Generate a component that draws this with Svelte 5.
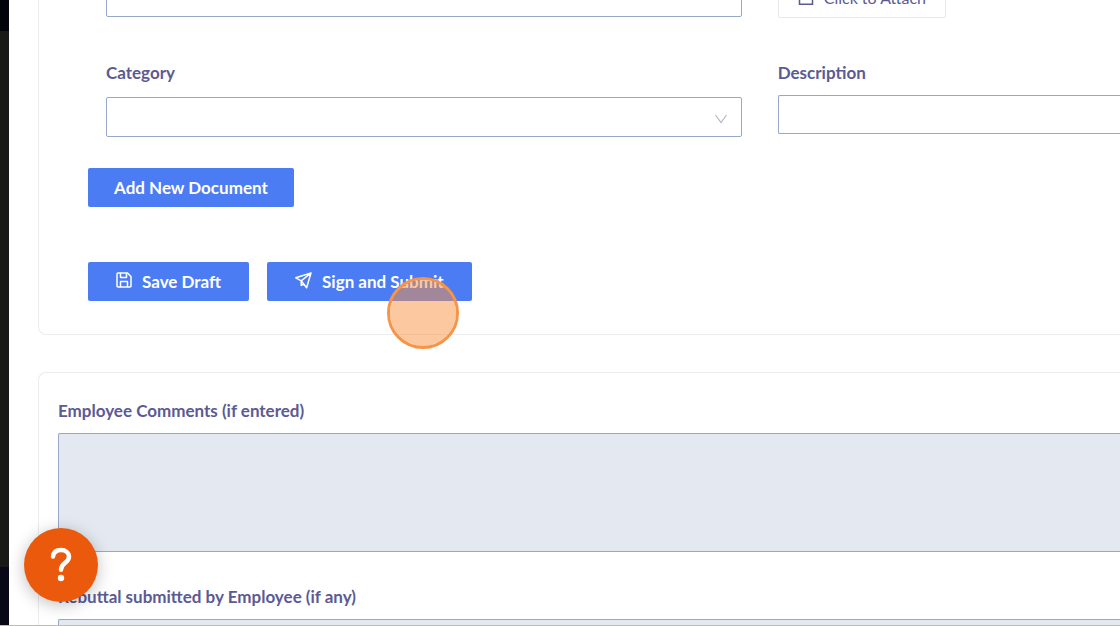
<script>
  let documentName = $state('');
  let category = $state('');
  let description = $state('');
</script>

<div class="shell">
  <aside class="rail">
    <div class="rail-top"></div>
    <div class="rail-middle"></div>
    <div class="rail-bottom"></div>
  </aside>

  <main class="content">
    <section class="card documents">
      <div class="fields">
        <div class="field">
          <input type="text" aria-label="Document name" bind:value={documentName} />
        </div>
        <div class="field">
          <button class="attach" type="button">
            <svg width="16" height="16" viewBox="0 0 16 16" fill="none" stroke="currentColor" stroke-width="1.5" aria-hidden="true">
              <path d="M1.500 9v5.300h13V9M8 8V1M5 4l3-3 3 3" />
            </svg>
            Click to Attach
          </button>
        </div>
        <div class="field">
          <label for="category">Category</label>
          <div class="select">
            <select id="category" bind:value={category}>
              <option value=""></option>
            </select>
            <svg class="chevron" width="12" height="10" viewBox="0 0 12 10" fill="none" stroke="currentColor" stroke-width="1.200" aria-hidden="true">
              <path d="M.5 1 6 8.500 11.500 1" />
            </svg>
          </div>
        </div>
        <div class="field">
          <label class="tight" for="description">Description</label>
          <input id="description" type="text" bind:value={description} />
        </div>
      </div>

      <button class="primary add" type="button">Add New Document</button>

      <div class="actions">
        <button class="primary" type="button">
          <svg width="16" height="16" viewBox="0 0 16 16" fill="none" stroke="currentColor" stroke-width="1.500" stroke-linejoin="round" aria-hidden="true">
            <path d="M2 1h9.500L15 4.500V14a1 1 0 0 1-1 1H2a1 1 0 0 1-1-1V2a1 1 0 0 1 1-1Z" />
            <path d="M4.500 1v4.500h6V1M4.500 15V9.500h7V15" />
          </svg>
          Save Draft
        </button>
        <button class="primary submit" type="button">
          <svg width="17" height="17" viewBox="0 0 17 17" fill="none" stroke="currentColor" stroke-width="1.500" stroke-linejoin="round" aria-hidden="true">
            <path d="M16 1 .8 5.800 6.200 8.800 11.600 15.800 16 1ZM6.200 8.800 16 1M6.200 8.800v4.600l2.500-1.400" />
          </svg>
          Sign and Submit
          <span class="pointer"></span>
        </button>
      </div>
    </section>

    <section class="card comments">
      <label for="comments">Employee Comments (if entered)</label>
      <textarea id="comments" readonly></textarea>
      <label for="rebuttal">Rebuttal submitted by Employee (if any)</label>
      <textarea id="rebuttal" readonly></textarea>
    </section>
  </main>

  <button class="help" type="button" aria-label="Help">
    <svg width="22" height="36" viewBox="0 0 22 36" fill="none" stroke="currentColor" stroke-width="4.500" stroke-linecap="round" stroke-linejoin="round" aria-hidden="true">
      <path d="M3 9.500C3.600 5 7 3 11 3c4.500 0 8 2.700 8 6.800 0 6.200-8 6-8 13" />
      <circle cx="11" cy="31" r="3.200" fill="currentColor" stroke="none" />
    </svg>
  </button>
</div>

<style>
  :global(body) {
    margin: 0;
    background: #fff;
  }

  .shell {
    box-sizing: border-box;
    display: grid;
    grid-template-columns: 9px minmax(0, 1fr);
    grid-template-rows: minmax(0, 1fr);
    height: 100vh;
    overflow: hidden;
    border-bottom: 1px solid #bdbbb9;
    color: #5b5a94;
    font: 700 17px/24px Lato, "Noto Sans", sans-serif;
  }

  .shell * {
    box-sizing: border-box;
  }

  .rail {
    display: flex;
    flex-direction: column;
    background: #191a18;
  }

  .rail-top {
    height: 31px;
    background: #03040b;
  }

  .rail-middle {
    flex: 1;
  }

  .rail-bottom {
    height: 58px;
    background: #090817;
  }

  .content {
    min-width: 0;
    padding-left: 29px;
  }

  .card {
    border: 1px solid #ebecef;
    border-right: 0;
  }

  .documents {
    margin-top: -24px;
    padding: 0 0 33px 49px;
    border-top: 0;
    border-radius: 0 0 0 8px;
  }

  .comments {
    margin-top: 37px;
    padding: 26px 0 0 19px;
    border-bottom: 0;
    border-radius: 8px 0 0 0;
  }

  .fields {
    display: grid;
    grid-template-columns: minmax(0, 65fr) minmax(0, 35fr);
    column-gap: 36px;
    row-gap: 43px;
    margin-bottom: 31px;
    padding: 2px 0 0 18px;
  }

  label {
    display: block;
    margin-bottom: 12px;
  }

  label.tight {
    margin-bottom: 10px;
  }

  input,
  select,
  textarea {
    display: block;
    width: 100%;
    margin: 0;
    padding: 8px 12px;
    border: 1px solid #98a8c8;
    border-radius: 2px;
    background: #fff;
    color: inherit;
    font: inherit;
    outline: 0;
    appearance: none;
  }

  input,
  select {
    height: 39px;
  }

  .fields > :nth-child(even) input {
    border-right: 0;
    border-radius: 2px 0 0 2px;
  }

  .select {
    display: grid;
    align-items: center;
  }

  .select > :global(*) {
    grid-area: 1 / 1;
  }

  select {
    height: 40px;
  }

  .chevron {
    justify-self: end;
    margin: 3px 15px 0 0;
    color: #b3b4c4;
    pointer-events: none;
  }

  button {
    display: inline-flex;
    align-items: center;
    margin: 0;
    font: inherit;
    cursor: pointer;
  }

  .attach {
    gap: 10px;
    height: 40px;
    padding: 0 19px;
    border: 1px solid #e8e9ee;
    border-radius: 2px;
    background: #fff;
    color: #5b5a94;
    font-size: 16px;
    font-weight: 400;
  }

  .primary {
    gap: 10px;
    height: 39px;
    padding: 0 28px;
    border: 0;
    border-radius: 2px;
    background: #4b7cf3;
    color: #fff;
    font-weight: 700;
    white-space: nowrap;
  }

  .primary.add {
    padding: 0 26px;
  }

  .primary svg {
    margin-bottom: 3px;
  }

  .actions {
    display: flex;
    gap: 18px;
    margin-top: 55px;
  }

  .submit {
    position: relative;
  }

  .pointer {
    position: absolute;
    right: 13px;
    bottom: -48px;
    width: 72px;
    height: 72px;
    border: 3px solid #f69447;
    border-radius: 50%;
    background: rgba(249, 146, 66, 0.5);
    background-clip: padding-box;
  }

  .comments label {
    margin-bottom: 10px;
  }

  textarea {
    height: 119px;
    border-right: 0;
    border-radius: 2px 0 0 2px;
    background: #e4e8f0;
    resize: none;
  }

  textarea + label {
    margin-top: 33px;
  }

  .help {
    position: fixed;
    bottom: 24px;
    left: 24px;
    justify-content: center;
    width: 74px;
    height: 74px;
    padding: 0;
    border: 0;
    border-radius: 50%;
    background: #eb5a0c;
    box-shadow: 0 3px 16px rgba(0, 0, 0, 0.25);
    color: #fff;
  }
</style>
